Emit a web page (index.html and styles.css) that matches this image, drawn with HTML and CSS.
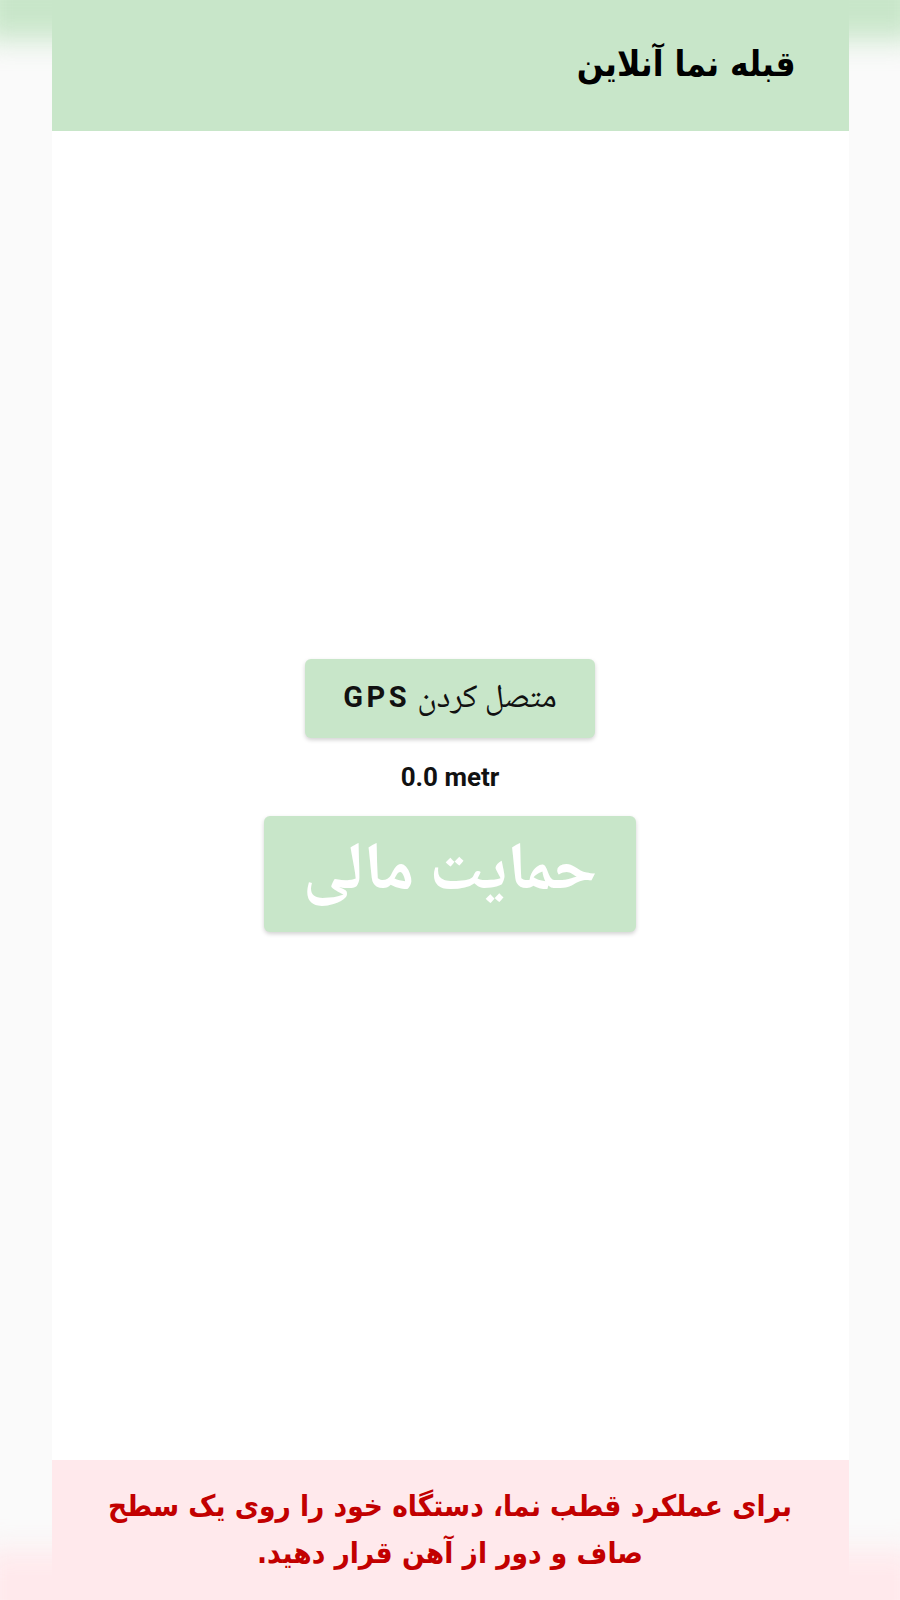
FILE: index.html
```html
<!DOCTYPE html>
<html lang="fa" dir="rtl">
<head>
    <meta charset="UTF-8">
    <meta name="viewport" content="width=device-width, initial-scale=1.0">
    <title>قبله نما آنلاین</title>
    <link rel="stylesheet" href="styles.css">
</head>
<body>
    <div class="app">
        <div class="header">
            <h1>قبله نما آنلاین</h1>
        </div>
        <div class="main">
            <button class="btn gps-btn">متصل کردن <b>GPS</b></button>
            <div class="distance" dir="ltr">0.0 metr</div>
            <button class="btn support-btn">حمایت مالی</button>
        </div>
        <div class="footer">
            <p>برای عملکرد قطب نما، دستگاه خود را روی یک سطح<br>صاف و دور از آهن قرار دهید.</p>
        </div>
    </div>
</body>
</html>
```

FILE: styles.css
```css
html, body {
    margin: 0;
    padding: 0;
}
body {
    background-color: #fafafa;
    font-family: "DejaVu Sans", sans-serif;
    overflow: hidden;
}
.app {
    width: 797px;
    margin: 0 auto;
    height: 1600px;
    display: flex;
    flex-direction: column;
    background-color: #fff;
    position: relative;
}
.header {
    height: 131px;
    background-color: #c8e6c9;
    display: flex;
    align-items: center;
    padding: 0 53px;
    position: relative;
}
.header::before {
    content: '';
    position: absolute;
    left: -70px;
    right: -70px;
    top: -30px;
    height: 70px;
    background-color: #c8e6c9;
    filter: blur(14px);
    z-index: -1;
}
.header h1 {
    margin: 0 0 3px;
    font-family: "DejaVu Sans Condensed", "DejaVu Sans", sans-serif;
    font-size: 35px;
    font-weight: bold;
    color: #000;
}
.main {
    flex: 1;
    display: flex;
    flex-direction: column;
    align-items: center;
    justify-content: center;
    background-color: #fff;
}
.btn {
    border: none;
    border-radius: 6px;
    background-color: #c8e6c9;
    box-shadow: 0 2px 4px rgba(0, 0, 0, 0.18);
    font-family: "Noto Naskh Arabic", "Noto Sans Arabic", "DejaVu Sans", sans-serif;
    cursor: pointer;
}
.gps-btn {
    width: 290px;
    height: 79px;
    font-size: 33px;
    color: #111;
    padding-top: 4px;
}
.gps-btn b {
    font-family: Roboto, sans-serif;
    font-size: 29px;
    font-weight: bold;
    letter-spacing: 3.5px;
}
.distance {
    font-family: Roboto, sans-serif;
    font-weight: bold;
    font-size: 26px;
    color: #111;
    margin: 24px 0 24px;
}
.support-btn {
    width: 372px;
    height: 116px;
    font-size: 67px;
    font-weight: bold;
    color: #fff;
}
.footer {
    height: 140px;
    background-color: #ffe9ec;
    display: flex;
    align-items: center;
    justify-content: center;
    position: relative;
}
.footer::before {
    content: '';
    position: absolute;
    left: -70px;
    right: -70px;
    bottom: -30px;
    height: 80px;
    background-color: #ffe9ec;
    filter: blur(14px);
    z-index: -1;
}
.footer p {
    margin: 0;
    text-align: center;
    font-family: "DejaVu Sans Condensed", "DejaVu Sans", sans-serif;
    font-weight: bold;
    font-size: 29.5px;
    line-height: 47px;
    color: #c20000;
}
```
